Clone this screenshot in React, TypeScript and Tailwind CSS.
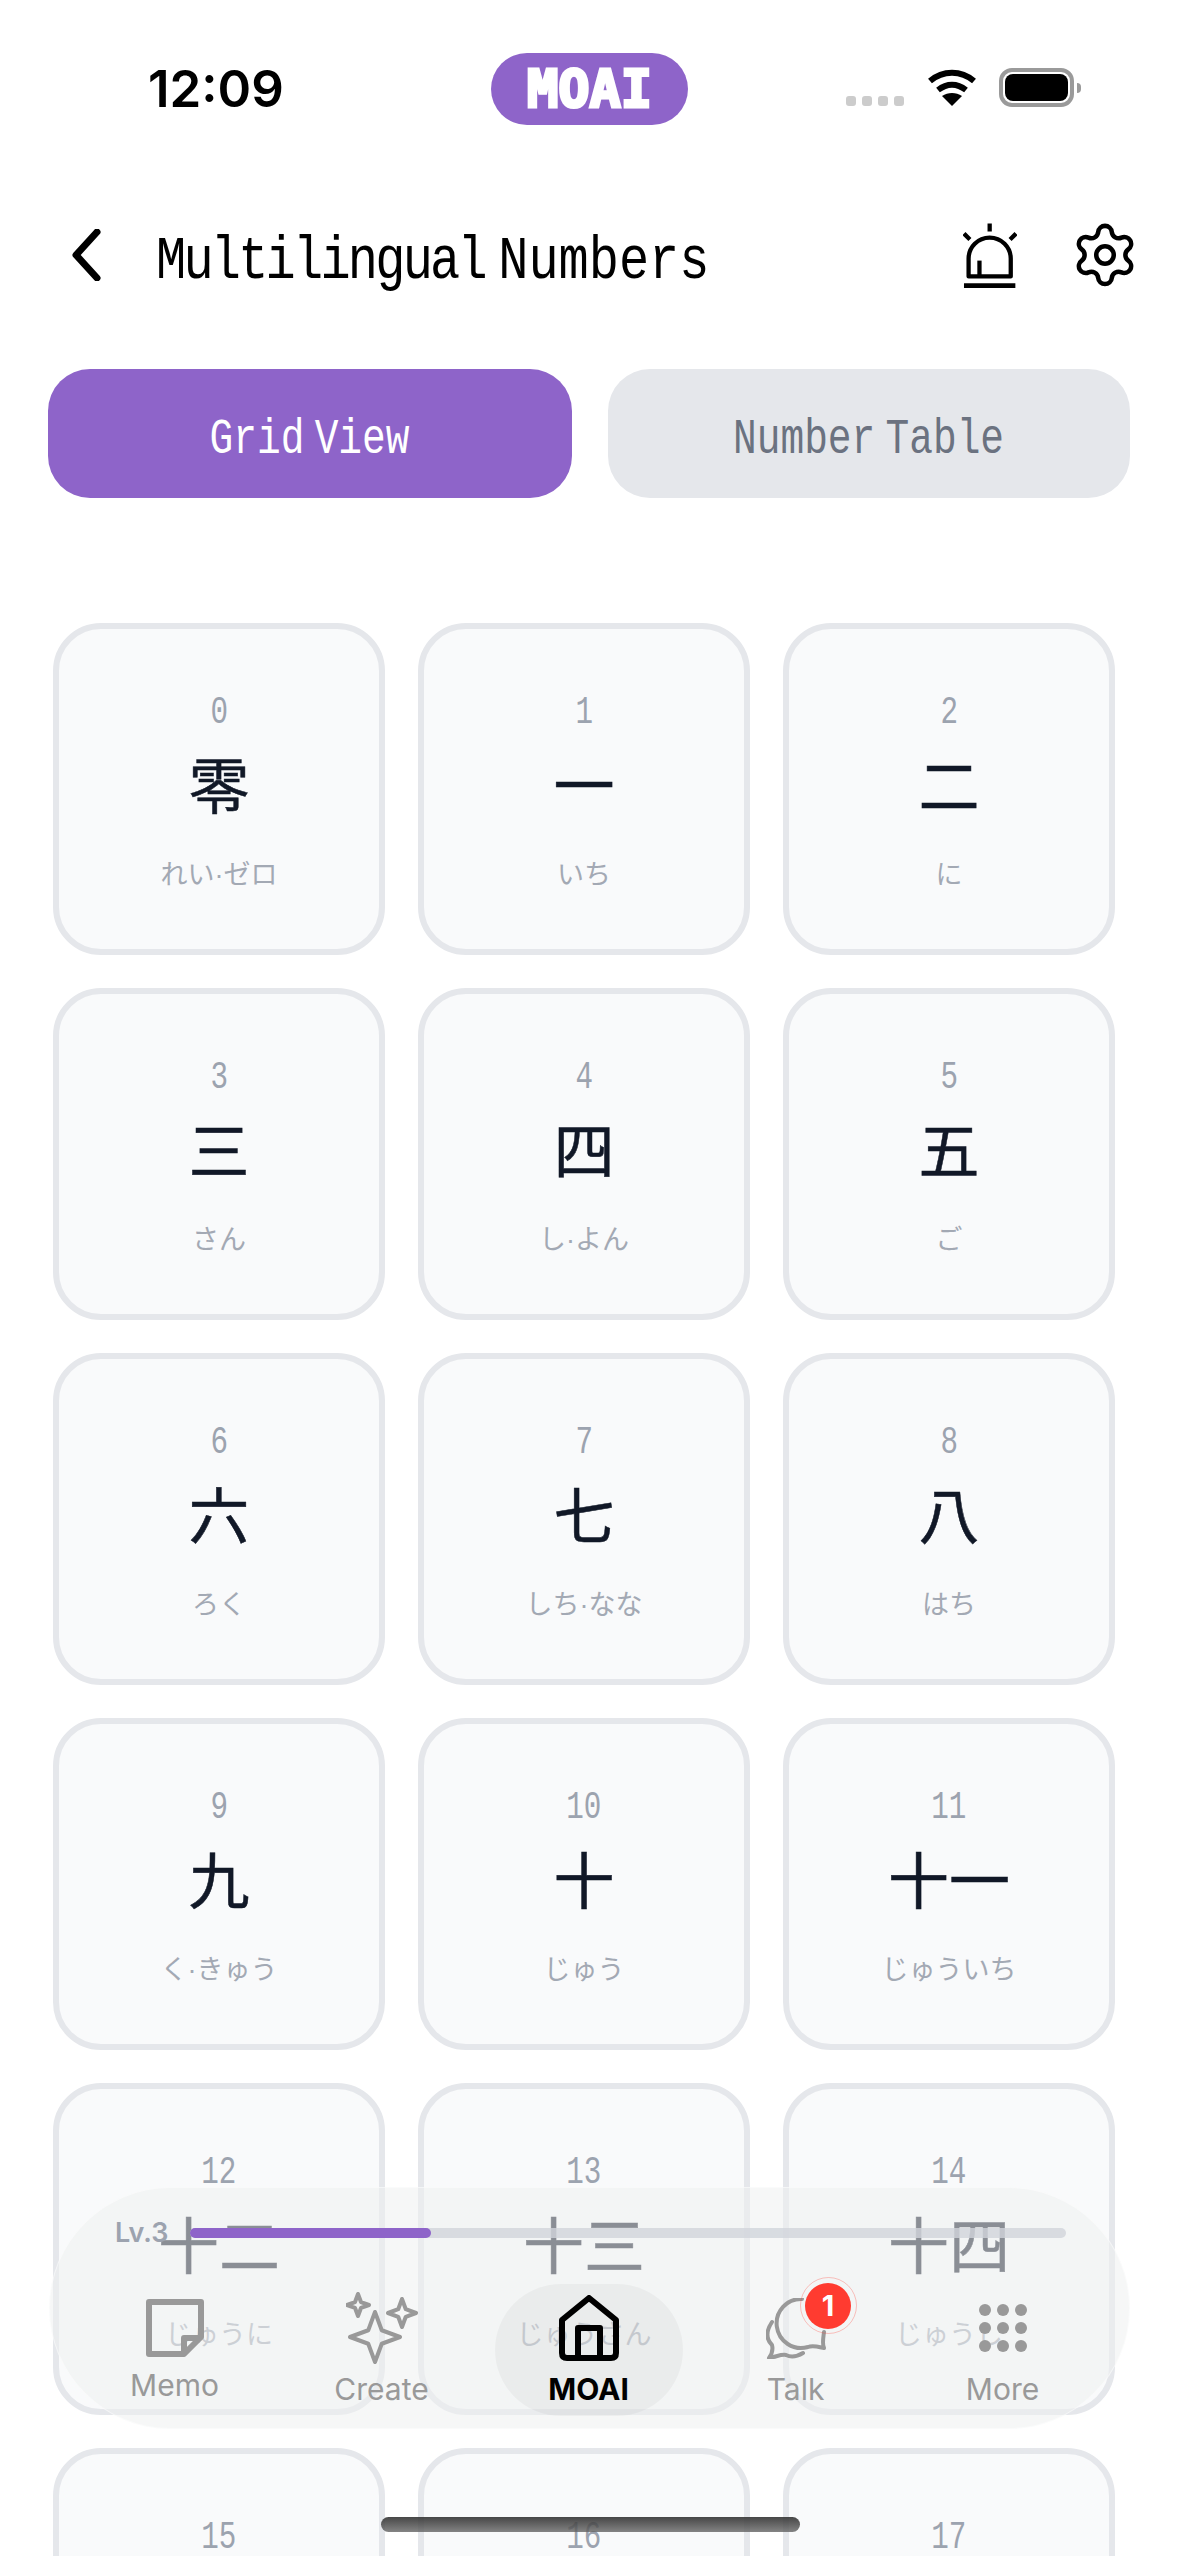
import { Settings } from "lucide-react";

const cells: [string, string, string][] = [
  ["0", "零", "れい·ゼロ"], ["1", "一", "いち"], ["2", "二", "に"],
  ["3", "三", "さん"], ["4", "四", "し·よん"], ["5", "五", "ご"],
  ["6", "六", "ろく"], ["7", "七", "しち·なな"], ["8", "八", "はち"],
  ["9", "九", "く·きゅう"], ["10", "十", "じゅう"], ["11", "十一", "じゅういち"],
  ["12", "十二", "じゅうに"], ["13", "十三", "じゅうさん"], ["14", "十四", "じゅうし"],
  ["15", "十五", "じゅうご"], ["16", "十六", "じゅうろく"], ["17", "十七", "じゅうしち"],
];

const mono = "font-['Liberation_Mono',monospace]";
const jp = "font-['Liberation_Sans','Noto_Sans_CJK_JP',sans-serif]";
const inter = "font-['Inter',sans-serif]";

function Card({ n, k, r }: { n: string; k: string; r: string }) {
  return (
    <div className="w-[332px] h-[332px] shrink-0 rounded-[48px] border-[6px] border-[#e5e7eb] bg-[#f9fafb] flex flex-col items-center pt-[64px]">
      <span className={`${mono} inline-block scale-x-[0.77] text-[38px] leading-[40px] text-[#9ca3af]`}>{n}</span>
      <span className={`${jp} mt-[19px] text-[61px] leading-[72px] font-normal text-[#111827] [-webkit-text-stroke:0.5px_#111827] whitespace-nowrap`}>{k}</span>
      <span className={`${jp} mt-[34px] text-[27px] leading-[34px] font-normal text-[#a3a9b4] whitespace-nowrap`}>{r}</span>
    </div>
  );
}

function Star({ x, y, r }: { x: number; y: number; r: number }) {
  const q = r * 0.27;
  return (
    <path d={`M${x} ${y - r}L${x + q} ${y - q}L${x + r} ${y}L${x + q} ${y + q}L${x} ${y + r}L${x - q} ${y + q}L${x - r} ${y}L${x - q} ${y - q}Z`} />
  );
}

function NavItem({ label, active, icon, lift }: { label: string; active?: boolean; icon: React.ReactNode; lift?: boolean }) {
  return (
    <div className="w-[207px] flex justify-center">
      <div className={`w-[188px] h-[132px] rounded-full flex flex-col items-center ${active ? "bg-[#00000009]" : ""}`}>
        <div className="relative h-[88px] flex items-center justify-center">{icon}</div>
        <span className={`${inter} text-[30px] leading-[34px] ${lift ? "-mt-[4px]" : ""} ${active ? "font-bold text-black" : "text-[#999999]"}`}>{label}</span>
      </div>
    </div>
  );
}

export default function App() {
  return (
    <div className="relative w-[1179px] h-[2556px] overflow-hidden bg-white">
      {/* status bar */}
      <div className="flex items-center h-[72px] mt-[53px] pl-[148px]">
        <span className={`${inter} w-[343px] text-[51px] leading-[68px] font-semibold text-black`}>12:09</span>
        <div className="w-[197px] h-[72px] rounded-full bg-[#8e64c9] flex items-center justify-center">
          <span className="font-['DejaVu_Sans_Mono',monospace] font-bold text-[52px] leading-[52px] text-white [-webkit-text-stroke:3px_white]">MOAI</span>
        </div>
        <div className="ml-[158px] mt-[24px] flex gap-[6px]">
          {[0, 1, 2, 3].map((i) => (
            <div key={i} className="w-[10px] h-[10px] rounded-[3px] bg-[#cccccc]" />
          ))}
        </div>
        <svg className="ml-[23px] -mt-[3px]" width="50" height="37" viewBox="0 0 50 37" fill="none">
          <path d="M3 12C16 1 34 1 47 12" stroke="black" strokeWidth="6" />
          <path d="M11 21C20 14 30 14 39 21" stroke="black" strokeWidth="6" />
          <path d="M25 37L15 27C21 23 29 23 35 27Z" fill="black" />
        </svg>
        <div className="ml-[22px] -mt-[3px] w-[75px] h-[39px] rounded-[13px] border-[4px] border-[#9a9a9a] p-[2px] flex">
          <div className="flex-1 rounded-[8px] bg-black" />
        </div>
        <div className="ml-[3px] -mt-[3px] w-[4px] h-[10px] rounded-r-full bg-[#9a9a9a]" />
      </div>

      {/* header */}
      <div className="flex items-center h-[66px] mt-[97px] pl-[71px]">
        <svg width="30" height="52" viewBox="0 0 30 52" fill="none">
          <path d="M26 3L5 26L26 49" stroke="black" strokeWidth="7" strokeLinecap="round" strokeLinejoin="round" />
        </svg>
        <div className="ml-[55px] w-[553px] whitespace-nowrap pt-[14px]">
          <span className={`${mono} inline-block origin-left scale-x-[0.824] tracking-[-3.35px] [word-spacing:-17px] text-[61px] leading-[66px] text-black`}>
            Multilingual <span className="tracking-[0px]">Numbers</span>
          </span>
        </div>
        <svg className="ml-[254px]" width="54" height="66" viewBox="489 572 164 198" fill="none" stroke="black" strokeWidth="13">
          <path d="M506 736V682A64 64 0 0 1 634 682V736Z" strokeLinejoin="round" />
          <path d="M539 688V732" />
          <path d="M570 575V600M492 606L510 624M650 606L632 624" />
          <path d="M492 764H648" strokeWidth="14" />
        </svg>
        <Settings className="ml-[53px]" size={70} strokeWidth={1.55} color="black" />
      </div>

      {/* tabs */}
      <div className="flex gap-[36px] pl-[48px] mt-[81px]">
        <div className="w-[524px] h-[129px] rounded-[42px] bg-[#8e64c9] flex items-center justify-center pt-[12px]">
          <span className={`${mono} inline-block scale-x-[0.79] [word-spacing:-17px] text-[50px] leading-[56px] text-white whitespace-nowrap`}>Grid View</span>
        </div>
        <div className="w-[522px] h-[129px] rounded-[42px] bg-[#e5e7eb] flex items-center justify-center pt-[12px]">
          <span className={`${mono} inline-block scale-x-[0.79] [word-spacing:-17px] text-[50px] leading-[56px] text-[#6b7280] whitespace-nowrap`}>Number Table</span>
        </div>
      </div>

      {/* grid */}
      <div className="grid grid-cols-[332px_332px_332px] gap-[33px] pl-[53px] mt-[125px]">
        {cells.map(([n, k, r]) => (
          <Card key={n} n={n} k={k} r={r} />
        ))}
      </div>

      {/* bottom nav */}
      <div className="absolute left-[49px] top-[2187px] w-[1081px] h-[242px] rounded-full bg-[#eef0f1]/[0.55] border border-white/50 pt-[31px]">
        <div className="flex items-center pl-[65px]">
          <span className={`${inter} w-[75px] text-[27px] leading-[28px] font-semibold text-[#9ca3af]`}>Lv.3</span>
          <div className="w-[876px] h-[10px] rounded-full bg-[#d1d5db]/80">
            <div className="h-[10px] w-[27.5%] rounded-full bg-[#8e64c9]" />
          </div>
        </div>
        <div className="flex pl-[21px] mt-[37px]">
          <NavItem
            label="Memo"
            lift
            icon={
              <svg width="58" height="58" viewBox="0 0 58 58" fill="none" stroke="#999999" strokeWidth="6" strokeLinejoin="round">
                <path d="M3 3H55V38L38 55H3Z" />
                <path d="M55 39H38V55" />
              </svg>
            }
          />
          <NavItem
            label="Create"
            icon={
              <svg width="72" height="72" viewBox="0 0 72 72" fill="none" stroke="#999999" strokeWidth="4" strokeLinejoin="round">
                <Star x={29} y={45} r={25} />
                <Star x={12} y={13} r={11} />
                <Star x={56} y={21} r={14} />
              </svg>
            }
          />
          <NavItem
            label="MOAI"
            active
            icon={
              <svg width="60" height="66" viewBox="0 0 60 66" fill="none" stroke="black" strokeWidth="6" strokeLinejoin="round">
                <path d="M3 25L30 3L57 25V58Q57 63 52 63H8Q3 63 3 58Z" />
                <path d="M19 63V33H41V63" />
              </svg>
            }
          />
          <NavItem
            label="Talk"
            icon={
              <>
                <svg width="60" height="61" viewBox="0 0 60 61" fill="none" stroke="#999999" strokeWidth="4" strokeLinecap="round" strokeLinejoin="round">
                  <path d="M36 1A24.5 24.5 0 1 0 42 49C47 47 53 49 58 50C56 46 57 42 58 34" />
                  <path d="M6 24C0 33 0 41 6 47C7 51 6 56 3 60C10 59 15 56 20 57C26 60 32 58 37 55" />
                </svg>
                <div className="absolute left-[34px] top-[-7px] w-[57px] h-[57px] rounded-full border border-[#ff3b30]/30 flex items-center justify-center">
                  <div className={`${inter} w-[46px] h-[46px] rounded-full bg-[#ff3b30] text-white text-[29px] font-bold leading-[46px] text-center`}>1</div>
                </div>
              </>
            }
          />
          <NavItem
            label="More"
            icon={
              <div className="grid grid-cols-3 gap-[6px]">
                {[0, 1, 2, 3, 4, 5, 6, 7, 8].map((i) => (
                  <div key={i} className="w-[12px] h-[12px] rounded-full bg-[#999999]" />
                ))}
              </div>
            }
          />
        </div>
      </div>

      {/* home indicator */}
      <div className="absolute left-[381px] top-[2517px] w-[419px] h-[15px] rounded-full bg-gradient-to-b from-[#333333]/90 to-[#666666]/80" />
    </div>
  );
}
